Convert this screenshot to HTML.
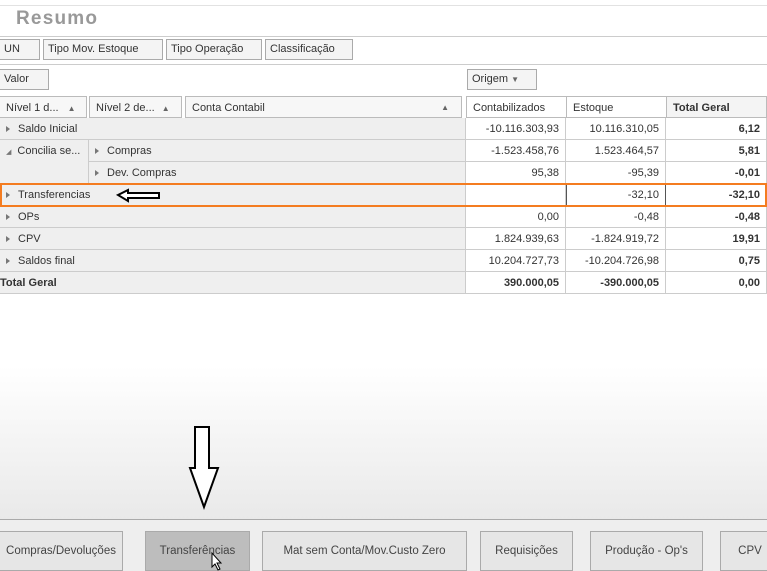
<!DOCTYPE html><html><head><style>
*{margin:0;padding:0;box-sizing:border-box}
body{width:767px;height:571px;overflow:hidden;position:relative;background:#fff;font-family:"Liberation Sans",sans-serif;font-size:11px;color:#333}
.a{position:absolute}
.btn{position:absolute;border:1px solid #aaa;background:#f4f4f4;padding:0 4px;line-height:19px;font-size:11px;white-space:nowrap;overflow:hidden}
.c{position:absolute;height:22px;line-height:23px;border-bottom:1px solid #ccc;border-right:1px solid #ccc;white-space:nowrap;padding:0 6px}
.l{background:#efefef}
.n{background:#fff;text-align:right}
.b{font-weight:bold}
.t:before{content:"";display:inline-block;border-left:4px solid #777;border-top:3px solid transparent;border-bottom:3px solid transparent;margin-right:8px}
.h{position:absolute;height:22px;line-height:22px;background:#f7f7f7;border:1px solid #bbb;padding:0 6px}
.fb{position:absolute;top:531px;height:40px;border:1px solid #aaa;background:#e6e6e6;text-align:center;line-height:38px;font-size:11.5px;color:#444}
</style></head><body>
<div class="a" style="left:0;top:5px;width:767px;height:1px;background:#e2e2e2"></div>
<div class="a" style="left:16px;top:8px;font-size:19px;font-weight:bold;color:#999;letter-spacing:1.2px">Resumo</div>
<div class="a" style="left:0;top:36px;width:767px;height:1px;background:#ccc"></div>
<div class="btn" style="left:-1px;top:39px;width:41px;height:21px">UN</div>
<div class="btn" style="left:43px;top:39px;width:120px;height:21px">Tipo Mov. Estoque</div>
<div class="btn" style="left:166px;top:39px;width:96px;height:21px">Tipo Operação</div>
<div class="btn" style="left:265px;top:39px;width:88px;height:21px">Classificação</div>
<div class="a" style="left:0;top:64px;width:767px;height:1px;background:#ccc"></div>
<div class="btn" style="left:-1px;top:69px;width:50px;height:21px">Valor</div>
<div class="btn" style="left:467px;top:69px;width:70px;height:21px">Origem <span style="font-size:8px;color:#666">▼</span></div>
<div class="h" style="left:-1px;top:96px;width:88px">Nível 1 d... <span style="font-size:8px;color:#666;margin-left:6px">▲</span></div>
<div class="h" style="left:89px;top:96px;width:93px">Nível 2 de... <span style="font-size:8px;color:#666;margin-left:4px">▲</span></div>
<div class="h" style="left:185px;top:96px;width:277px">Conta Contabil <span style="font-size:8px;color:#666;position:absolute;right:12px">▲</span></div>
<div class="h" style="left:466px;top:96px;width:101px;background:#fff">Contabilizados</div>
<div class="h" style="left:566px;top:96px;width:101px;background:#fff">Estoque</div>
<div class="h b" style="left:666px;top:96px;width:101px;background:#f4f4f4">Total Geral</div>

<div class="c l t" style="left:0;top:118px;width:466px">Saldo Inicial</div>
<div class="c l" style="left:0;top:140px;width:89px;height:44px"><span style="font-size:7px;color:#777;margin-right:6px">◢</span>Concilia se...</div>
<div class="c l t" style="left:89px;top:140px;width:377px">Compras</div>
<div class="c l t" style="left:89px;top:162px;width:377px">Dev. Compras</div>
<div class="c l t" style="left:0;top:184px;width:466px">Transferencias</div>
<div class="c l t" style="left:0;top:206px;width:466px">OPs</div>
<div class="c l t" style="left:0;top:228px;width:466px">CPV</div>
<div class="c l t" style="left:0;top:250px;width:466px">Saldos final</div>
<div class="c l b" style="left:0;top:272px;width:466px;padding-left:0">Total Geral</div>

<div class="c n" style="left:466px;top:118px;width:100px">-10.116.303,93</div>
<div class="c n" style="left:566px;top:118px;width:100px">10.116.310,05</div>
<div class="c n b" style="left:666px;top:118px;width:101px">6,12</div>
<div class="c n" style="left:466px;top:140px;width:100px">-1.523.458,76</div>
<div class="c n" style="left:566px;top:140px;width:100px">1.523.464,57</div>
<div class="c n b" style="left:666px;top:140px;width:101px">5,81</div>
<div class="c n" style="left:466px;top:162px;width:100px">95,38</div>
<div class="c n" style="left:566px;top:162px;width:100px">-95,39</div>
<div class="c n b" style="left:666px;top:162px;width:101px">-0,01</div>
<div class="c n" style="left:466px;top:184px;width:100px"></div>
<div class="c n" style="left:566px;top:184px;width:100px;border:1px solid #555;line-height:21px">-32,10</div>
<div class="c n b" style="left:666px;top:184px;width:101px">-32,10</div>
<div class="c n" style="left:466px;top:206px;width:100px">0,00</div>
<div class="c n" style="left:566px;top:206px;width:100px">-0,48</div>
<div class="c n b" style="left:666px;top:206px;width:101px">-0,48</div>
<div class="c n" style="left:466px;top:228px;width:100px">1.824.939,63</div>
<div class="c n" style="left:566px;top:228px;width:100px">-1.824.919,72</div>
<div class="c n b" style="left:666px;top:228px;width:101px">19,91</div>
<div class="c n" style="left:466px;top:250px;width:100px">10.204.727,73</div>
<div class="c n" style="left:566px;top:250px;width:100px">-10.204.726,98</div>
<div class="c n b" style="left:666px;top:250px;width:101px">0,75</div>
<div class="c n b" style="left:466px;top:272px;width:100px">390.000,05</div>
<div class="c n b" style="left:566px;top:272px;width:100px">-390.000,05</div>
<div class="c n b" style="left:666px;top:272px;width:101px">0,00</div>

<div class="a" style="left:0;top:183px;width:767px;height:24px;border:2px solid #f47c20"></div>

<div class="a" style="left:0;top:300px;width:767px;height:220px;background:linear-gradient(#fff,#fff 30%,#e9e9e9)"></div>
<div class="a" style="left:0;top:519px;width:767px;height:1px;background:#aaa"></div>
<div class="a" style="left:0;top:520px;width:767px;height:51px;background:#eee"></div>
<div class="fb" style="left:-1px;width:124px">Compras/Devoluções</div>
<div class="fb" style="left:145px;width:105px;background:#bdbdbd">Transferências</div>
<div class="fb" style="left:262px;width:205px">Mat sem Conta/Mov.Custo Zero</div>
<div class="fb" style="left:480px;width:93px">Requisições</div>
<div class="fb" style="left:590px;width:113px">Produção - Op's</div>
<div class="fb" style="left:720px;width:60px">CPV</div>

<svg class="a" style="left:0;top:0" width="767" height="571">
<path d="M118 195 L128 190 L128 193 L159 193 L159 198 L128 198 L128 201 Z" fill="#fff" stroke="#000" stroke-width="2"/>
<path d="M195 427 L209 427 L209 468 L218 468 L204 507 L190 468 L195 468 Z" fill="#fff" stroke="#000" stroke-width="2"/>
<path d="M212 553 L212 567 L215 564 L218 570 L220 569 L217 563 L221 563 Z" fill="#fff" stroke="#000" stroke-width="1"/>
</svg>
</body></html>
